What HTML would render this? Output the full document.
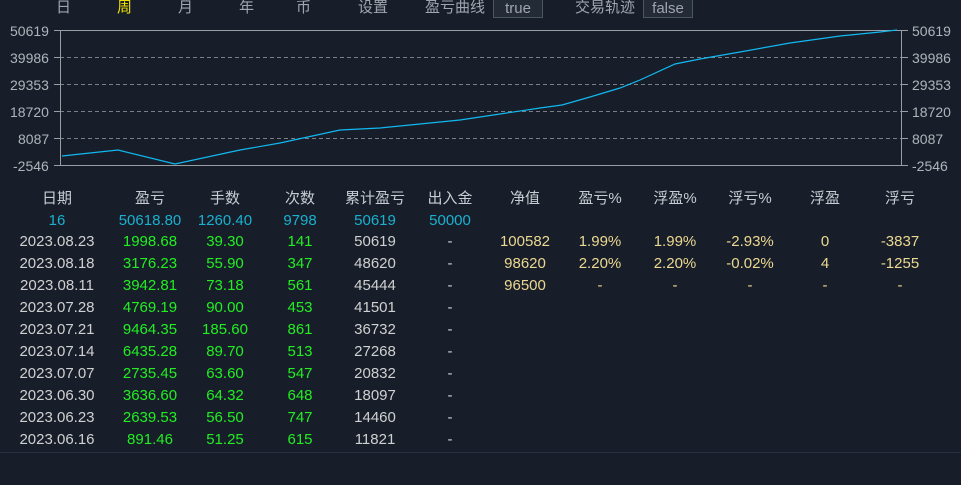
<!DOCTYPE html>
<html><head><meta charset="utf-8"><style>
body{margin:0;width:961px;height:485px;background:#171e2a;overflow:hidden;position:relative;font-family:"Liberation Sans","Noto Sans CJK SC",sans-serif;}
.t{position:absolute;white-space:nowrap;font-size:15px;line-height:18px;}
.nav{color:#a0a6ae;top:-1px;}
.box{position:absolute;top:-2px;height:20px;border:1px solid #4a5560;background:#222b36;color:#a0a6ae;font-size:15px;line-height:20px;text-align:center;box-sizing:border-box;}
.ax{position:absolute;font-size:14px;color:#b0b4ba;line-height:14px;}
.c{position:absolute;width:100px;text-align:center;font-size:15px;line-height:18px;white-space:nowrap;}
.h{color:#c8ccd2}.cy{color:#1ab0d0}.g{color:#22ee22}.w{color:#d0d0d0}.y{color:#ecd890}
</style></head><body>
<div class="t nav" style="left:56px">日</div>
<div class="t nav" style="left:117px;color:#f0e000">周</div>
<div class="t nav" style="left:178px">月</div>
<div class="t nav" style="left:239px">年</div>
<div class="t nav" style="left:296px">币</div>
<div class="t nav" style="left:358px">设置</div>
<div class="t nav" style="left:425px">盈亏曲线</div>
<div class="box" style="left:493px;width:50px">true</div>
<div class="t nav" style="left:575px">交易轨迹</div>
<div class="box" style="left:643px;width:50px">false</div>

<svg style="position:absolute;left:0;top:0" width="961" height="200">
<g stroke="#7a7f86" stroke-dasharray="4,3" stroke-width="1">
<line x1="60" y1="57.5" x2="902" y2="57.5"/><line x1="60" y1="84.5" x2="902" y2="84.5"/><line x1="60" y1="111.5" x2="902" y2="111.5"/><line x1="60" y1="138.5" x2="902" y2="138.5"/>
</g>
<g stroke="#9a9ea4" stroke-width="1" fill="none">
<line x1="60" y1="30.5" x2="902" y2="30.5"/><line x1="60" y1="165.5" x2="902" y2="165.5"/>
<line x1="60.5" y1="30" x2="60.5" y2="166"/><line x1="901.5" y1="30" x2="901.5" y2="166"/>
<line x1="54" y1="30.5" x2="60" y2="30.5"/><line x1="54" y1="57.5" x2="60" y2="57.5"/><line x1="54" y1="84.5" x2="60" y2="84.5"/><line x1="54" y1="111.5" x2="60" y2="111.5"/><line x1="54" y1="138.5" x2="60" y2="138.5"/><line x1="54" y1="165.5" x2="60" y2="165.5"/>
<line x1="902" y1="30.5" x2="908" y2="30.5"/><line x1="902" y1="57.5" x2="908" y2="57.5"/><line x1="902" y1="84.5" x2="908" y2="84.5"/><line x1="902" y1="111.5" x2="908" y2="111.5"/><line x1="902" y1="138.5" x2="908" y2="138.5"/><line x1="902" y1="165.5" x2="908" y2="165.5"/>
</g>
<polyline fill="none" stroke="#12b8f0" stroke-width="1.2" points="62,156 118,150 175,164 240,150 280,143 340,130 380,128 420,124 460,120 500,114 540,108 562,105 590,97 620,88 640,80 675,64 700,59 740,52 790,43 840,36 880,32 897,30"/>
</svg>
<div class="ax" style="left:10px;top:24px">50619</div>
<div class="ax" style="left:10px;top:51px">39986</div>
<div class="ax" style="left:10px;top:78px">29353</div>
<div class="ax" style="left:10px;top:105px">18720</div>
<div class="ax" style="left:18px;top:132px">8087</div>
<div class="ax" style="left:13px;top:159px">-2546</div>
<div class="ax" style="left:912px;top:24px">50619</div>
<div class="ax" style="left:912px;top:51px">39986</div>
<div class="ax" style="left:912px;top:78px">29353</div>
<div class="ax" style="left:912px;top:105px">18720</div>
<div class="ax" style="left:912px;top:132px">8087</div>
<div class="ax" style="left:912px;top:159px">-2546</div>

<div id="tbl"></div>
<div style="position:absolute;left:0;top:452px;width:961px;height:1px;background:#263140"></div>
<script>
function cx(i){return i==0?57:150+(i-1)*75;}
function row(y,vals,cls){var s='';for(var i=0;i<vals.length;i++){var c=Array.isArray(cls)?cls[i]:cls;s+='<div class="c '+c+'" style="left:'+(cx(i)-50)+'px;top:'+(y-9)+'px">'+vals[i]+'</div>';}return s;}
var h='';
h+=row(199,['日期','盈亏','手数','次数','累计盈亏','出入金','净值','盈亏%','浮盈%','浮亏%','浮盈','浮亏'],'h');
h+=row(221,['16','50618.80','1260.40','9798','50619','50000'],'cy');
var d=[['2023.08.23','1998.68','39.30','141','50619','-','100582','1.99%','1.99%','-2.93%','0','-3837'],
['2023.08.18','3176.23','55.90','347','48620','-','98620','2.20%','2.20%','-0.02%','4','-1255'],
['2023.08.11','3942.81','73.18','561','45444','-','96500','-','-','-','-','-'],
['2023.07.28','4769.19','90.00','453','41501','-'],
['2023.07.21','9464.35','185.60','861','36732','-'],
['2023.07.14','6435.28','89.70','513','27268','-'],
['2023.07.07','2735.45','63.60','547','20832','-'],
['2023.06.30','3636.60','64.32','648','18097','-'],
['2023.06.23','2639.53','56.50','747','14460','-'],
['2023.06.16','891.46','51.25','615','11821','-']];
var cl=['w','g','g','g','w','w','y','y','y','y','y','y'];
for(var i=0;i<d.length;i++)h+=row(242+i*22,d[i],cl);
document.getElementById('tbl').innerHTML=h;
</script>
</body></html>
